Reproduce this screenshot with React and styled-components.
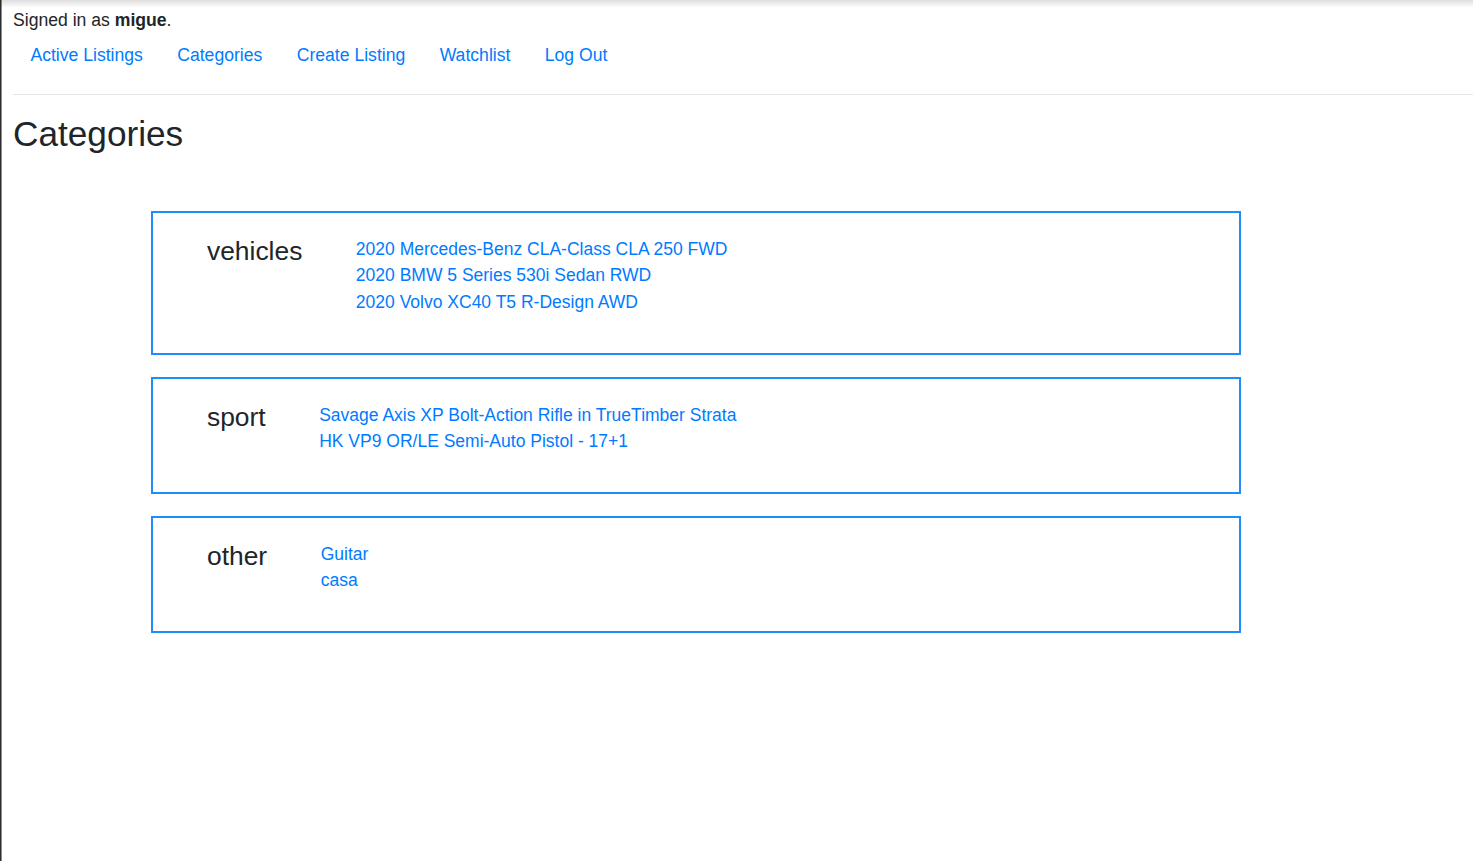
import React from "react";
import styled, { createGlobalStyle } from "styled-components";

const GlobalStyle = createGlobalStyle`
  html, body { margin: 0; padding: 0; background: #fff; }
  body {
    font-family: "Liberation Sans", Arial, Helvetica, sans-serif;
    font-size: 17.6px;
    line-height: 26.4px;
    color: #212529;
    min-height: 861px;
    box-sizing: border-box;
    border-left: 1px solid #2e2e2e;
    box-shadow: inset 1px 0 0 #c98035;
    padding: 7px 0 0 12px;
  }
  body::before {
    content: "";
    position: fixed;
    left: 0; right: 0; top: 0;
    height: 8px;
    background: linear-gradient(to bottom, rgba(0,0,0,0.13), rgba(0,0,0,0));
    pointer-events: none;
  }
  * { box-sizing: border-box; }
`;

const SignedIn = styled.div`
  padding-left: 0;
`;

const Nav = styled.ul`
  display: flex;
  list-style: none;
  margin: 0;
  padding: 0;
`;

const NavLink = styled.a`
  display: block;
  padding: 8.8px 17px 8.8px 17.4px;
  color: #007bff;
  text-decoration: none;
`;

const Rule = styled.hr`
  margin: 16.6px 0 17.6px;
  border: 0;
  border-top: 1px solid rgba(0, 0, 0, 0.1);
`;

const Title = styled.h2`
  margin: 0 0 8.8px;
  font-size: 35.2px;
  line-height: 1.2;
  font-weight: 500;
`;

const List = styled.div`
  display: flex;
  flex-direction: column;
  gap: 22px;
  margin: 56px 0 0 138px;
  width: 1090px;
`;

const Card = styled.div`
  display: flex;
  align-items: flex-start;
  border: 2px solid #1e8cfa;
  padding: 23px 22px 37.5px 54px;
`;

const Name = styled.h4`
  margin: 0;
  font-size: 26.4px;
  line-height: 1.2;
  font-weight: 400;
`;

const Items = styled.ul`
  list-style: none;
  margin: 0 0 0 53.5px;
  padding: 0;
  font-size: 17.5px;
`;

const ItemLink = styled.a`
  color: #007bff;
  text-decoration: none;
`;

const categories = [
  {
    name: "vehicles",
    items: [
      "2020 Mercedes-Benz CLA-Class CLA 250 FWD",
      "2020 BMW 5 Series 530i Sedan RWD",
      "2020 Volvo XC40 T5 R-Design AWD",
    ],
  },
  {
    name: "sport",
    items: [
      "Savage Axis XP Bolt-Action Rifle in TrueTimber Strata",
      "HK VP9 OR/LE Semi-Auto Pistol - 17+1",
    ],
  },
  { name: "other", items: ["Guitar", "casa"] },
];

export default function App() {
  return (
    <>
      <GlobalStyle />
      <SignedIn>
        Signed in as <strong>migue</strong>.
      </SignedIn>
      <Nav>
        {["Active Listings", "Categories", "Create Listing", "Watchlist", "Log Out"].map((l) => (
          <li key={l}>
            <NavLink href="#">{l}</NavLink>
          </li>
        ))}
      </Nav>
      <Rule />
      <Title>Categories</Title>
      <List>
        {categories.map((c) => (
          <Card key={c.name}>
            <Name>{c.name}</Name>
            <Items>
              {c.items.map((i) => (
                <li key={i}>
                  <ItemLink href="#">{i}</ItemLink>
                </li>
              ))}
            </Items>
          </Card>
        ))}
      </List>
    </>
  );
}
